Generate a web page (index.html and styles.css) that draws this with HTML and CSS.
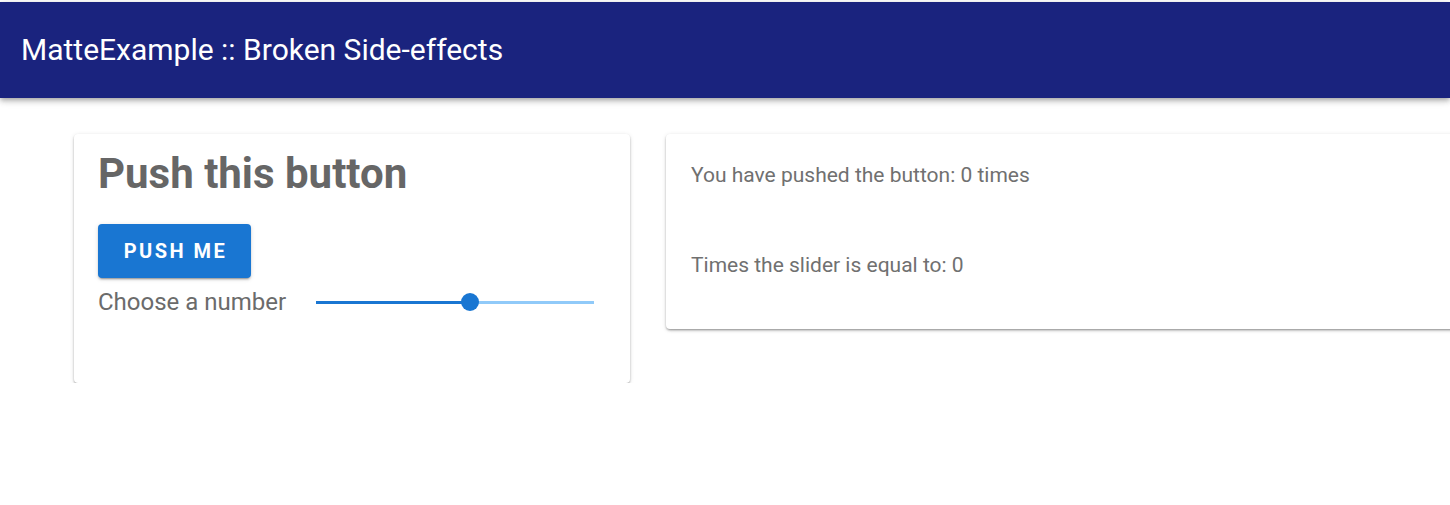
FILE: index.html
```html
<!DOCTYPE html>
<html lang="en">
<head>
<meta charset="utf-8">
<title>MatteExample :: Broken Side-effects</title>
<link rel="stylesheet" href="styles.css">
</head>
<body>
<header class="topbar">
  <h1 class="title">MatteExample :: Broken Side-effects</h1>
</header>
<main class="content">
  <section class="card card-left">
    <h2 class="heading">Push this button</h2>
    <button class="push-btn" type="button">Push me</button>
    <div class="slider-row">
      <span class="slider-label">Choose a number</span>
      <div class="slider">
        <div class="track-active" style="width: 55%"></div>
        <div class="thumb"></div>
        <div class="track-inactive"></div>
      </div>
    </div>
  </section>
  <section class="card card-right">
    <p class="info">You have pushed the button: 0 times</p>
    <p class="info second">Times the slider is equal to: 0</p>
  </section>
</main>
</body>
</html>
```
FILE: styles.css
```css
* { box-sizing: border-box; }
html, body {
  margin: 0;
  padding: 0;
  background: #fff;
  overflow: hidden;
  font-family: Roboto, "Liberation Sans", Arial, sans-serif;
}
body { padding-top: 2px; }
.topbar {
  height: 96px;
  background: #1a237e;
  display: flex;
  align-items: center;
  padding-left: 21px;
  box-shadow: 0 2px 4px -1px rgba(0,0,0,.2), 0 4px 5px 0 rgba(0,0,0,.14), 0 1px 10px 0 rgba(0,0,0,.12);
  position: relative;
  z-index: 1;
}
.title {
  margin: 0;
  color: #fff;
  font-size: 30px;
  font-weight: 400;
  line-height: 34px;
}
.content {
  display: flex;
  gap: 36px;
  padding: 36px 0 0 74px;
  align-items: flex-start;
  width: 1600px;
}
.card {
  background: #fff;
  border-radius: 4px;
  box-shadow: 0 2px 3px -1px rgba(0,0,0,.3), 0 1px 2px 0 rgba(0,0,0,.16), 0 1px 5px 0 rgba(0,0,0,.1);
}
.card-left {
  width: 556px;
  height: 249px;
  padding: 16px 24px 0 24px;
  display: flex;
  flex-direction: column;
  align-items: flex-start;
}
.heading {
  margin: 0;
  font-size: 42px;
  line-height: 48px;
  font-weight: 700;
  color: #666;
}
.push-btn {
  margin-top: 26px;
  width: 153px;
  height: 54px;
  border: 0;
  border-radius: 4px;
  background: #1976d2;
  color: #fff;
  font-family: inherit;
  font-size: 20px;
  font-weight: 700;
  letter-spacing: 2.5px;
  text-transform: uppercase;
  box-shadow: 0 3px 1px -2px rgba(0,0,0,.2), 0 2px 2px 0 rgba(0,0,0,.14), 0 1px 5px 0 rgba(0,0,0,.12);
  padding: 0 0 0 2px;
}
.slider-row {
  margin-top: 12px;
  display: flex;
  align-items: center;
  height: 24px;
  width: 100%;
}
.slider-label {
  font-size: 24px;
  color: #6b6b6b;
  line-height: 24px;
  width: 218px;
  flex: none;
}
.slider {
  width: 278px;
  height: 18px;
  display: flex;
  align-items: center;
  position: relative;
}
.track-active {
  height: 3px;
  background: #1976d2;
}
.track-inactive {
  flex: 1;
  height: 3px;
  background: #90caf9;
}
.thumb {
  width: 18px;
  height: 18px;
  border-radius: 50%;
  background: #1976d2;
  margin: 0 -9px 0 -8px;
  position: relative;
  z-index: 1;
}
.card-right {
  width: 820px;
  height: 195px;
  padding: 29px 24px 0 25px;
}
.info {
  margin: 0;
  font-size: 21px;
  line-height: 24px;
  color: #707070;
}
.info.second { margin-top: 66px; }
```
